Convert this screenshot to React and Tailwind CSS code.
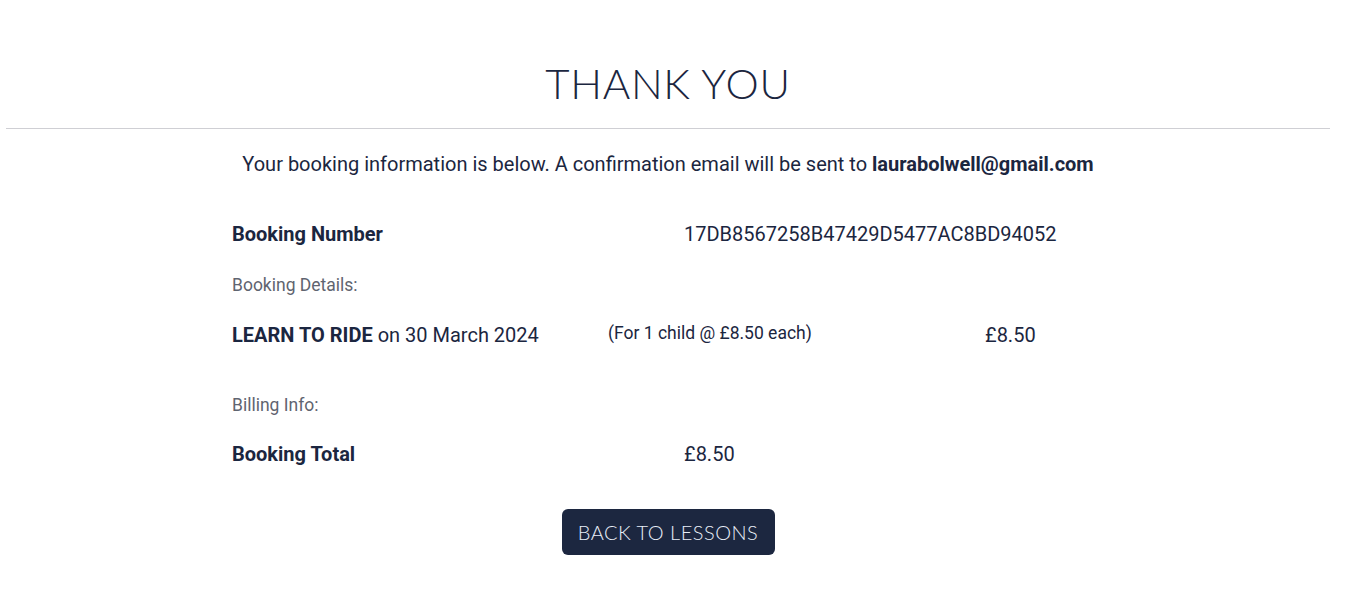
import React from "react";

const ink = "text-[#1b2640]";

const App = () => {
  return (
    <div className="min-h-[602px] w-[1336px] bg-white font-['Roboto','Liberation_Sans',sans-serif]">
      {/* Heading */}
      <div className="pt-[56px] pb-[18px] text-center">
        <h1
          className={`font-['Lato','DejaVu_Sans',sans-serif] text-[42px] font-light leading-[54px] tracking-[0.7px] ${ink}`}
        >
          THANK YOU
        </h1>
      </div>
      <div className="ml-[6px] w-[1324px] border-t border-[#cfcfd4]" />

      {/* Intro */}
      <p className={`mt-[22px] text-center text-[20px] leading-[26px] ${ink}`}>
        Your booking information is below. A confirmation email will be sent to{" "}
        <span className="font-bold">laurabolwell@gmail.com</span>
      </p>

      {/* Booking info */}
      <div className={`ml-[232px] mt-[44px] w-[880px] ${ink}`}>
        <div className="flex h-[26px] items-center text-[20px]">
          <div className="w-[452px] font-bold">Booking Number</div>
          <div>17DB8567258B47429D5477AC8BD94052</div>
        </div>

        <div className="mt-[26px] text-[17.5px] leading-[24px] text-[#5f6470]">
          Booking Details:
        </div>

        <div className="mt-[25px] flex h-[26px] items-center text-[20px]">
          <div className="w-[376px]">
            <span className="font-bold">LEARN TO RIDE</span> on 30 March 2024
          </div>
          <div className="w-[377px] -translate-y-[2px] text-[17.5px]">
            (For 1 child @ £8.50 each)
          </div>
          <div>£8.50</div>
        </div>

        <div className="mt-[45px] text-[17.5px] leading-[24px] text-[#5f6470]">
          Billing Info:
        </div>

        <div className="mt-[24px] flex h-[26px] items-center text-[20px]">
          <div className="w-[452px] font-bold">Booking Total</div>
          <div>£8.50</div>
        </div>
      </div>

      {/* Button */}
      <div className="mt-[42px] flex justify-center">
        <button
          className="h-[46px] w-[213px] rounded-[6px] bg-[#1c2740] font-['Lato','DejaVu_Sans',sans-serif] text-[20px] font-light tracking-[0.5px] text-[#e8eef8]"
        >
          BACK TO LESSONS
        </button>
      </div>
    </div>
  );
};

export default App;
